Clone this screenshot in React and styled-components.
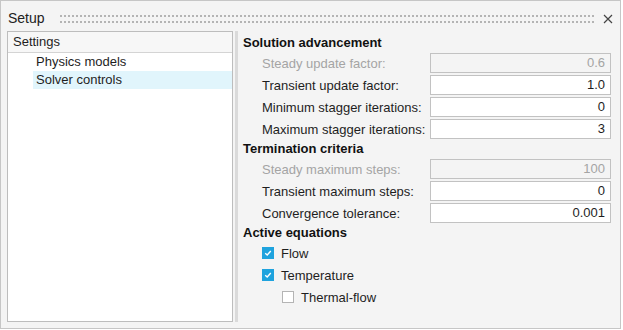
import React from 'react';
import styled, { createGlobalStyle } from 'styled-components';

const GlobalStyle = createGlobalStyle`
    body {
        margin: 0;
        background: #ffffff;
        font-family: "Liberation Sans", Arial, sans-serif;
        font-size: 13px;
        color: #1e1e1e;
    }
`;

const sections = [
    {
        title: 'Solution advancement',
        fields: [
            { label: 'Steady update factor:', value: '0.6', disabled: true },
            { label: 'Transient update factor:', value: '1.0' },
            { label: 'Minimum stagger iterations:', value: '0' },
            { label: 'Maximum stagger iterations:', value: '3' },
        ],
    },
    {
        title: 'Termination criteria',
        fields: [
            { label: 'Steady maximum steps:', value: '100', disabled: true },
            { label: 'Transient maximum steps:', value: '0' },
            { label: 'Convergence tolerance:', value: '0.001' },
        ],
    },
];

const equations = [
    { label: 'Flow', checked: true, level: 0 },
    { label: 'Temperature', checked: true, level: 0 },
    { label: 'Thermal-flow', checked: false, level: 1 },
];

function CheckMark() {
    return (
        <svg width="8" height="8" viewBox="0 0 8 8">
            <path d="M1.2 4.2 L3.2 6 L6.8 2" fill="none" stroke="#fff" strokeWidth="1.4" />
        </svg>
    );
}

export default function App() {
    return (
        <>
            <GlobalStyle />
            <Frame>
                <TitleBar>
                    <Title>Setup</Title>
                    <Grip />
                    <Close>
                        <svg width="10" height="10" viewBox="0 0 10 10">
                            <path d="M1 1 L9 9 M9 1 L1 9" stroke="#444" strokeWidth="1.2" />
                        </svg>
                    </Close>
                </TitleBar>
                <Body>
                    <Tree>
                        <TreeHeader>Settings</TreeHeader>
                        <TreeItem>Physics models</TreeItem>
                        <TreeItem selected>Solver controls</TreeItem>
                    </Tree>
                    <Splitter />
                    <Panel>
                        {sections.map((s) => (
                            <React.Fragment key={s.title}>
                                <Heading>{s.title}</Heading>
                                {s.fields.map((f) => (
                                    <Row key={f.label}>
                                        <Label disabled={f.disabled}>{f.label}</Label>
                                        <Field disabled={f.disabled}>{f.value}</Field>
                                    </Row>
                                ))}
                            </React.Fragment>
                        ))}
                        <Heading>Active equations</Heading>
                        {equations.map((e) => (
                            <CheckRow key={e.label} level={e.level}>
                                <Box checked={e.checked}>{e.checked && <CheckMark />}</Box>
                                {e.label}
                            </CheckRow>
                        ))}
                    </Panel>
                </Body>
            </Frame>
        </>
    );
}

const Frame = styled.div`
    width: 621px;
    height: 329px;
    box-sizing: border-box;
    border: 1px solid #c6c6c6;
    background: #f4f4f4;
    display: flex;
    flex-direction: column;
`;

const TitleBar = styled.div`
    height: 30px;
    display: flex;
    align-items: flex-start;
    padding: 9px 7px 0 7px;
    box-sizing: border-box;
`;

const Title = styled.div`
    font-size: 14px;
    line-height: 16px;
    color: #222;
`;

const Grip = styled.div`
    flex: 1;
    height: 8px;
    margin: 5px 7px 0 15px;
    background-image: linear-gradient(to right, #b4b4b4 2px, transparent 2px),
        linear-gradient(to right, #b4b4b4 2px, transparent 2px);
    background-size: 4px 2px, 4px 2px;
    background-position: 0 0, 0 6px;
    background-repeat: repeat-x;
`;

const Close = styled.div`
    width: 10px;
    height: 10px;
    margin-top: 4px;
    display: flex;
`;

const Body = styled.div`
    flex: 1;
    display: flex;
    padding: 0 0 6px 6px;
`;

const Tree = styled.div`
    width: 226px;
    box-sizing: border-box;
    border: 1px solid #bdbdbd;
    background: #ffffff;
`;

const TreeHeader = styled.div`
    height: 20px;
    line-height: 20px;
    padding-left: 5px;
    background: #f7f7f7;
    border-bottom: 1px solid #d4d4d4;
`;

const TreeItem = styled.div`
    height: 18px;
    line-height: 18px;
    margin-left: 25px;
    padding-left: 3px;
    background: ${(p) => (p.selected ? '#e1f5fc' : 'transparent')};
`;

const Splitter = styled.div`
    width: 3px;
    margin-left: 2px;
    background: #dadada;
`;

const Panel = styled.div`
    flex: 1;
    display: flex;
    flex-direction: column;
    gap: 2px;
    padding: 4px 9px 0 5px;
`;

const Heading = styled.div`
    height: 16px;
    line-height: 16px;
    font-weight: bold;
    color: #111;
`;

const Row = styled.div`
    display: grid;
    grid-template-columns: 168px 1fr;
    align-items: center;
    height: 20px;
    padding-left: 19px;
`;

const Label = styled.div`
    color: ${(p) => (p.disabled ? '#a4a4a4' : '#1e1e1e')};
    white-space: nowrap;
`;

const Field = styled.div`
    height: 20px;
    box-sizing: border-box;
    border: 1px solid #c2c2c2;
    background: ${(p) => (p.disabled ? '#f4f4f4' : '#ffffff')};
    color: ${(p) => (p.disabled ? '#a4a4a4' : '#1e1e1e')};
    text-align: right;
    line-height: 18px;
    padding-right: 5px;
`;

const CheckRow = styled.div`
    display: flex;
    align-items: center;
    gap: 7px;
    height: 20px;
    padding-left: ${(p) => 19 + p.level * 20}px;
`;

const Box = styled.div`
    width: 12px;
    height: 12px;
    box-sizing: border-box;
    display: flex;
    align-items: center;
    justify-content: center;
    background: ${(p) => (p.checked ? '#1fa3de' : '#ffffff')};
    border: 1px solid ${(p) => (p.checked ? '#1fa3de' : '#b4b4b4')};
`;
